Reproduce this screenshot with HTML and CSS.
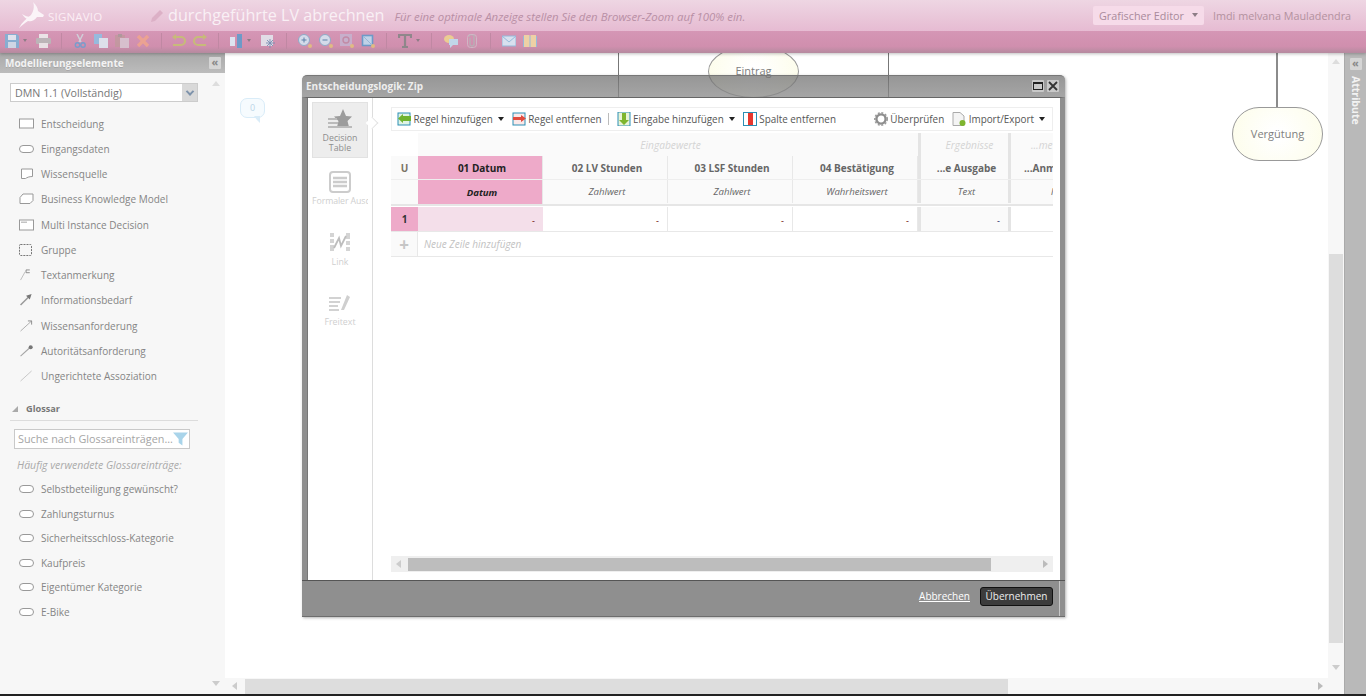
FILE: index.html
```html
<!DOCTYPE html>
<html lang="de">
<head>
<meta charset="utf-8">
<title>Signavio</title>
<link rel="stylesheet" href="styles.css">
</head>
<body>
<div class="page">
  <header class="header">
    <div class="topbar">
      <svg class="logo" viewBox="0 0 30 30" width="30" height="30"><path d="M1 28C4 22 9 18 13 15C15 12 17 7 15 2C18 5 20 8 20 11L26 15L25 17L19 17C16 21 13 22 10 21C7 23 4 25 1 28Z" fill="#fbf4f8"/><path d="M11 20C8 19 6 17 4 14C7 16 10 17 13 17Z" fill="#fbf4f8"/></svg>
      <span class="brand">SIGNAVIO</span>
      <svg class="pencil" viewBox="0 0 14 14" width="14" height="14"><path d="M1 13L2 9L10 1L13 4L5 12Z" fill="#dcb0c6"/></svg>
      <span class="doc-title">durchgeführte LV abrechnen</span>
      <span class="hint">Für eine optimale Anzeige stellen Sie den Browser-Zoom auf 100% ein.</span>
      <span class="spacer"></span>
      <span class="editor-btn">Grafischer Editor <i class="tri"></i></span>
      <span class="user">Imdi melvana Mauladendra</span>
    </div>
    <div class="toolbar">
      <div class="tb-group first">
        <svg class="ti" viewBox="0 0 14 14"><path d="M0 0H12L14 2V14H0Z" fill="#7fb2d6"/><rect x="3" y="1" width="8" height="5" fill="#e3eef6"/><rect x="3" y="8" width="8" height="6" fill="#cfe0ec"/></svg>
        <i class="drop g4"></i>
        <svg class="ti g9 wide" viewBox="0 0 15 14"><rect x="3" y="0" width="9" height="5" fill="#eee"/><rect x="0" y="4" width="15" height="6" rx="1" fill="#b9b9b9"/><rect x="3" y="9" width="9" height="5" fill="#ececec"/></svg>
      </div>
      <div class="tb-group">
        <svg class="ti" viewBox="0 0 14 14"><path d="M4 0L8 8M10 0L6 8" stroke="#cfd7de" stroke-width="1.5"/><circle cx="4.5" cy="11" r="2.2" fill="none" stroke="#6d9fd0" stroke-width="1.4"/><circle cx="10" cy="11" r="2.2" fill="none" stroke="#6d9fd0" stroke-width="1.4"/></svg>
        <svg class="ti" viewBox="0 0 14 14"><rect x="0" y="0" width="8" height="10" fill="#8fc0e4"/><rect x="5" y="4" width="9" height="10" fill="#dfeaf3"/></svg>
        <svg class="ti" viewBox="0 0 14 14"><rect x="0" y="1" width="10" height="12" fill="#c2999f"/><rect x="3" y="0" width="4" height="3" fill="#a99"/><rect x="5" y="4" width="9" height="10" fill="#d8c6d2"/></svg>
        <svg class="ti" viewBox="0 0 14 14"><path d="M2 2L12 12M12 2L2 12" stroke="#efa58e" stroke-width="3.4"/></svg>
      </div>
      <div class="tb-group narrow">
        <svg class="ti" viewBox="0 0 14 14"><path d="M3 3H9A4 4 0 0 1 9 11H1" fill="none" stroke="#c6c073" stroke-width="2.2"/><path d="M4 0L0 3L4 6Z" fill="#c6c073"/></svg>
        <svg class="ti" viewBox="0 0 14 14"><path d="M11 3H5A4 4 0 0 0 5 11H13" fill="none" stroke="#c6c073" stroke-width="2.2"/><path d="M10 0L14 3L10 6Z" fill="#c6c073"/></svg>
      </div>
      <div class="tb-group">
        <svg class="ti small" viewBox="0 0 12 14"><rect x="0" y="3" width="5" height="9" fill="#dff0fa"/><rect x="7" y="0" width="5" height="14" fill="#5f9ccc"/></svg>
        <i class="drop g5"></i>
        <svg class="ti g10" viewBox="0 0 14 14"><rect x="0" y="1" width="12" height="11" fill="#e3e8ee"/><path d="M9 5V14M5 9H14M6 6L12 12M12 6L6 12" stroke="#6d8fb3" stroke-width=".9"/></svg>
      </div>
      <div class="tb-group">
        <svg class="ti" viewBox="0 0 14 14"><circle cx="6" cy="6" r="5.5" fill="#d5e6f2" stroke="#86aecb"/><path d="M3.5 6H8.5M6 3.5V8.5" stroke="#4d7fa8"/><circle cx="12" cy="12" r="2" fill="#e3c27e"/></svg>
        <svg class="ti" viewBox="0 0 14 14"><circle cx="6" cy="6" r="5.5" fill="#d5e6f2" stroke="#86aecb"/><path d="M3.5 6H8.5" stroke="#4d7fa8"/><circle cx="12" cy="12" r="2" fill="#e3c27e"/></svg>
        <svg class="ti" viewBox="0 0 14 14"><rect x="0" y="0" width="12" height="12" fill="#c6b3cf"/><circle cx="6" cy="6" r="3" fill="none" stroke="#c08aa5" stroke-width="1.4"/><circle cx="12" cy="12" r="2" fill="#e3c27e"/></svg>
        <svg class="ti" viewBox="0 0 14 14"><rect x="1.5" y="1.5" width="10" height="10" fill="#bedcf0" stroke="#5f9ccc" stroke-width="1.6"/><path d="M3 3L10 10" stroke="#8ebbdc"/><circle cx="12" cy="12" r="2" fill="#e3c27e"/></svg>
      </div>
      <div class="tb-group">
        <svg class="ti" viewBox="0 0 14 14"><path d="M1 4V1H13V4M7 1V13M4 13H10" fill="none" stroke="#868686" stroke-width="2.2"/></svg>
        <i class="drop gm3"></i>
      </div>
      <div class="tb-group wide-group">
        <svg class="ti" viewBox="0 0 14 14"><ellipse cx="5" cy="5" rx="5" ry="4" fill="#efd58e"/><path d="M5 5H14V11H9L6 14V11H5Z" fill="#bfe0f2"/></svg>
        <svg class="ti clip" viewBox="0 0 10 14"><path d="M3 4V10A2 2 0 0 0 7 10V3A2.5 2.5 0 0 0 2 3" fill="none" stroke="#b8b0b6" stroke-width="1.6"/><rect x=".5" y=".5" width="9" height="13" rx="3" fill="none" stroke="#d0bcc8"/></svg>
      </div>
      <div class="tb-group last">
        <svg class="ti" viewBox="0 0 14 14"><rect x="0" y="2" width="14" height="10" fill="#d9ecf8" stroke="#8dbfe0"/><path d="M0 2L7 8L14 2" fill="none" stroke="#8dbfe0"/></svg>
        <svg class="ti" viewBox="0 0 14 14"><rect x="0" y="2" width="14" height="11" fill="#8dbfe0"/><path d="M1 1H6.5V13H1ZM7.5 1H13V13H7.5Z" fill="#f2d9a4"/></svg>
      </div>
    </div>
  </header>

  <div class="main">
    <aside class="sidebar">
      <div class="panel-title"><span>Modellierungselemente</span><b class="collapse">«</b></div>
      <i class="arr up side-up"></i>
      <div class="select"><span>DMN 1.1 (Vollständig)</span><b><i class="chev"></i></b></div>
      <ul class="shapes">
        <li><svg viewBox="0 0 16 11" class="si"><rect x=".5" y=".5" width="14" height="9" fill="#fff" stroke="#999"/></svg>Entscheidung</li>
        <li><svg viewBox="0 0 16 11" class="si"><rect x=".5" y="2" width="14" height="7" rx="3.5" fill="#fff" stroke="#999"/></svg>Eingangsdaten</li>
        <li><svg viewBox="0 0 16 11" class="si"><path d="M2.5 .5H13.5V8C10 8 8 9 6.5 10H2.5Z" fill="#fff" stroke="#999"/></svg>Wissensquelle</li>
        <li><svg viewBox="0 0 16 11" class="si"><path d="M4 .5H14V7L11 10H1V4Z" fill="#fff" stroke="#999"/></svg>Business Knowledge Model</li>
        <li><svg viewBox="0 0 16 11" class="si"><rect x=".5" y=".5" width="14" height="10" fill="#fff" stroke="#999"/><path d="M3 2V3.5M5 2V3.5M7 2V3.5" stroke="#888"/></svg>Multi Instance Decision</li>
        <li><svg viewBox="0 0 16 12" class="si"><rect x=".5" y=".5" width="12" height="11" rx="1" fill="none" stroke="#777" stroke-dasharray="2 1"/></svg>Gruppe</li>
        <li><svg viewBox="0 0 16 13" class="si"><path d="M1 12L6 3" stroke="#bbb"/><path d="M11 1H7V4H11" fill="none" stroke="#888"/></svg>Textanmerkung</li>
        <li><svg viewBox="0 0 16 13" class="si"><path d="M1 12L10 3" stroke="#999" stroke-width="1.6"/><path d="M13 0L7 2L11 6Z" fill="#777"/></svg>Informationsbedarf</li>
        <li><svg viewBox="0 0 16 13" class="si"><path d="M1 12L13 1" stroke="#aaa"/><path d="M9 1H13V5" fill="none" stroke="#888"/></svg>Wissensanforderung</li>
        <li><svg viewBox="0 0 16 13" class="si"><path d="M1 12L11 3" stroke="#a5a5a5" stroke-width="1.2"/><circle cx="12" cy="2.5" r="2.2" fill="#777"/></svg>Autoritätsanforderung</li>
        <li><svg viewBox="0 0 16 13" class="si"><path d="M1 12L13 1" stroke="#c4c4c4"/></svg>Ungerichtete Assoziation</li>
      </ul>
      <div class="gloss-head"><i class="gloss-tri"></i>Glossar</div>
      <div class="gloss-search"><span>Suche nach Glossareinträgen...</span><svg viewBox="0 0 16 14" width="16" height="14"><path d="M0 0H16L10 7V14L6 11V7Z" fill="#a9d4ea"/></svg></div>
      <div class="gloss-note">Häufig verwendete Glossareinträge:</div>
      <ul class="terms">
        <li><svg viewBox="0 0 16 11" class="si"><rect x=".5" y="2" width="14" height="7" rx="3.5" fill="#fff" stroke="#999"/></svg>Selbstbeteiligung gewünscht?</li>
        <li><svg viewBox="0 0 16 11" class="si"><rect x=".5" y="2" width="14" height="7" rx="3.5" fill="#fff" stroke="#999"/></svg>Zahlungsturnus</li>
        <li><svg viewBox="0 0 16 11" class="si"><rect x=".5" y="2" width="14" height="7" rx="3.5" fill="#fff" stroke="#999"/></svg>Sicherheitsschloss-Kategorie</li>
        <li><svg viewBox="0 0 16 11" class="si"><rect x=".5" y="2" width="14" height="7" rx="3.5" fill="#fff" stroke="#999"/></svg>Kaufpreis</li>
        <li><svg viewBox="0 0 16 11" class="si"><rect x=".5" y="2" width="14" height="7" rx="3.5" fill="#fff" stroke="#999"/></svg>Eigentümer Kategorie</li>
        <li><svg viewBox="0 0 16 11" class="si"><rect x=".5" y="2" width="14" height="7" rx="3.5" fill="#fff" stroke="#999"/></svg>E-Bike</li>
      </ul>
      <i class="arr down side-down"></i>
    </aside>

    <section class="workspace">
      <div class="canvas">
        <div class="bubble">0</div>
        <div class="edge e1"></div>
        <div class="edge e2"></div>
        <div class="edge e3"></div>
        <div class="node eintrag"><span>Eintrag</span></div>
        <div class="node verguetung"><span>Vergütung</span></div>
      </div>
      <div class="hscroll"><i class="arr left"></i><div class="hthumb"></div><i class="arr right"></i></div>
    </section>

    <div class="vscroll"><i class="arr up"></i><div class="vthumb"></div><i class="arr down"></i></div>

    <aside class="attr">
      <b class="collapse">«</b>
      <span class="attr-label">Attribute</span>
    </aside>
  </div>
  <div class="bottom-line"></div>

  <div class="modal">
    <div class="modal-head">
      <span>Entscheidungslogik: Zip</span>
      <div class="win-btns">
        <b><i class="win-max"></i></b>
        <b class="x"><svg viewBox="0 0 10 10" width="10" height="10"><path d="M1 1L9 9M9 1L1 9" stroke="#333" stroke-width="1.8"/></svg></b>
      </div>
    </div>
    <div class="modal-body">
      <nav class="tabs">
        <div class="tab active">
          <svg viewBox="0 0 24 22" width="24" height="22"><path d="M15 0L18 7L24 7.5L19.5 12L21 18H9L10.5 12L6 7.5L12 7Z" fill="#9c9c9c"/><path d="M0 10H9M0 14H10M0 18H24" stroke="#bbb" stroke-width="2"/></svg>
          <span>Decision<br>Table</span>
        </div>
        <div class="tab dim tab-form">
          <svg viewBox="0 0 22 22" width="22" height="22"><rect x="1" y="1" width="20" height="20" rx="3" fill="none" stroke="#ccc" stroke-width="2"/><path d="M4 7H18M4 11H18M4 15H18" stroke="#ccc" stroke-width="2.4"/></svg>
          <span class="clip-label">Formaler Ausdruck</span>
        </div>
        <div class="tab dim">
          <svg viewBox="0 0 22 20" width="22" height="20"><path d="M1 1H5V5H1ZM1 7H5V11H1ZM1 13H5V19H1ZM17 1H21V7H17ZM17 9H21V13H17ZM17 15H21V19H17Z" fill="#d4d4d4"/><path d="M5 16L10 6L12 14L17 4" fill="none" stroke="#bdbdbd" stroke-width="1.8"/></svg>
          <span>Link</span>
        </div>
        <div class="tab dim tab-free">
          <svg viewBox="0 0 22 18" width="22" height="18"><path d="M0 4H12M0 8H11M0 12H9M0 16H10" stroke="#d2d2d2" stroke-width="2"/><path d="M12 16L18 1L21 3L15 16Z" fill="#cfcfcf"/></svg>
          <span>Freitext</span>
        </div>
        <i class="tab-notch"></i>
      </nav>
      <div class="editor">
        <div class="ed-toolbar">
          <span class="tool"><svg viewBox="0 0 14 14" width="14" height="14"><rect x="1" y="1" width="12" height="12" fill="#dff3e4" stroke="#2c8fb5"/><path d="M6 4H14V9H6V11L1 6.5L6 2Z" fill="#6fb32f"/></svg>Regel hinzufügen<i class="tri dark"></i></span>
          <span class="tool"><svg viewBox="0 0 14 14" width="14" height="14"><rect x="1" y="1" width="12" height="12" fill="#fbe8e8" stroke="#2c8fb5"/><path d="M1 5H9V3L14 6.5L9 10V8H1Z" fill="#e14a3d"/></svg>Regel entfernen</span>
          <i class="tool-sep"></i>
          <span class="tool"><svg viewBox="0 0 14 14" width="14" height="14"><rect x="1" y="0" width="12" height="14" fill="#e8f3d8" stroke="#2c8fb5"/><path d="M5 1H9V8H12L7 13L2 8H5Z" fill="#7eb52e"/></svg>Eingabe hinzufügen<i class="tri dark"></i></span>
          <span class="tool"><svg viewBox="0 0 14 14" width="14" height="14"><rect x=".5" y=".5" width="13" height="13" fill="#fff" stroke="#2c8fb5"/><rect x="5" y="1" width="5" height="12" fill="#e8382e"/></svg>Spalte entfernen</span>
          <span class="spacer"></span>
          <span class="tool"><svg viewBox="0 0 14 14" width="14" height="14"><circle cx="7" cy="7" r="4.6" fill="none" stroke="#8d8d8d" stroke-width="2.4"/><circle cx="7" cy="7" r="6.2" fill="none" stroke="#9a9a9a" stroke-width="1.6" stroke-dasharray="2 1.6"/></svg>Überprüfen</span>
          <span class="tool"><svg viewBox="0 0 14 14" width="14" height="14"><path d="M1 .5H8L12 4V13.5H1Z" fill="#f4f4f4" stroke="#aaa"/><circle cx="10.5" cy="11" r="3" fill="#7eb52e"/></svg>Import/Export<i class="tri dark"></i></span>
        </div>
        <div class="table-wrap">
          <div class="dt">
            <div class="row r-group">
              <div class="c cu blank"></div>
              <div class="c cg-in">Eingabewerte</div>
              <div class="c cg-out thick">Ergebnisse</div>
              <div class="c cg-more thick">...me</div>
            </div>
            <div class="row r-head">
              <div class="c cu u">U</div>
              <div class="c w1 sel">01 Datum</div>
              <div class="c w1">02 LV Stunden</div>
              <div class="c w1">03 LSF Stunden</div>
              <div class="c w1">04 Bestätigung</div>
              <div class="c w2 thick">...e Ausgabe</div>
              <div class="c w3 thick">...Anmerkung</div>
            </div>
            <div class="row r-type">
              <div class="c cu"></div>
              <div class="c w1 sel">Datum</div>
              <div class="c w1">Zahlwert</div>
              <div class="c w1">Zahlwert</div>
              <div class="c w1">Wahrheitswert</div>
              <div class="c w2 thick">Text</div>
              <div class="c w3 thick lang">lang</div>
            </div>
            <div class="row r-data">
              <div class="c cu idx">1</div>
              <div class="c w1 val active">-</div>
              <div class="c w1 val">-</div>
              <div class="c w1 val">-</div>
              <div class="c w1 val">-</div>
              <div class="c w2 val thick out">-</div>
              <div class="c w3 thick"></div>
            </div>
            <div class="row r-add">
              <div class="c cu plus">+</div>
              <div class="c add-label">Neue Zeile hinzufügen</div>
            </div>
          </div>
        </div>
        <div class="t-scroll"><i class="arr left small-arr"></i><div class="t-thumb"></div><i class="arr right dark-arr"></i></div>
      </div>
    </div>
    <div class="modal-foot">
      <a class="cancel" href="#">Abbrechen</a>
      <button class="apply" type="button">Übernehmen</button>
    </div>
  </div>
</div>
</body>
</html>
```

FILE: styles.css
```css
* { box-sizing: border-box; }
html, body { margin: 0; padding: 0; height: 100%; overflow: hidden; }
body { font-family: "Open Sans", "Liberation Sans", sans-serif; color: #777; background: #fff; }
ul { list-style: none; margin: 0; padding: 0; }
.page { position: relative; width: 1366px; height: 696px; overflow: hidden; display: flex; flex-direction: column; }
.spacer { flex: 1; }

.header { height: 53px; flex: none; position: relative; z-index: 3; box-shadow: 0 1px 3px rgba(0,0,0,.25); }
.topbar { height: 31px; display: flex; align-items: center; background: linear-gradient(#eed6e3, #e6bbd2); padding-right: 10px; }
.logo { margin: 0 0 0 18px; align-self: flex-start; }
.brand { font-size: 11.5px; color: #fbeef5; margin: 2px 0 0 0; width: 100px; letter-spacing: .2px; }
.pencil { margin-left: 2px; margin-right: 4px; }
.doc-title { font-size: 16.2px; color: #f9f0f5; margin-top: -2px; }
.hint { font-size: 11.4px; font-style: italic; color: #b88fa5; margin-left: 10px; margin-top: 1px; }
.editor-btn { height: 19px; width: 111px; padding-left: 6px; display: flex; align-items: center; gap: 8px; font-size: 10.8px; color: #a98a9b; background: #f6dbe9; border-radius: 2px; margin-right: 9px; margin-top: -1px; white-space: nowrap; }
.user { font-size: 10.8px; color: #b3929f; width: 143px; margin-top: -1px; white-space: nowrap; }
.tri { display: inline-block; width: 0; height: 0; border: 3px solid transparent; border-top: 4px solid #8d7d86; border-bottom: 0; }
.tri.dark { border-top-color: #222; margin-left: 2.5px; }

.toolbar { height: 22px; display: flex; align-items: center; background: linear-gradient(#d596b5, #d08fae 70%, #b58a9f); }
.tb-group { display: flex; align-items: center; gap: 7px; padding: 0 11px; height: 16px; border-right: 1px solid #c088a3; margin-top: -3px; }
.tb-group.first { padding-left: 5px; gap: 0; padding-right: 10px; }
.tb-group.narrow { padding: 0 11px 0 10px; }
.tb-group.wide-group { padding: 0 13px 0 12px; }
.tb-group.last { border-right: 0; }
.ti { width: 14px; height: 14px; flex: none; opacity: .88; }
.ti.wide { width: 15px; }
.ti.small { width: 12px; }
.ti.clip { width: 10px; margin-left: 2px; }
.drop { width: 0; height: 0; border: 2.5px solid transparent; border-top: 3px solid #8d7d86; border-bottom: 0; flex: none; }
.g4 { margin-left: 4px; }
.g5 { margin-left: -2px; }
.gm3 { margin-left: -3px; }
.g9 { margin-left: 9px; }
.g10 { margin-left: 3px; }

.main { flex: 1; display: flex; min-height: 0; }
.sidebar { width: 225px; flex: none; background: #f7f7f7; position: relative; }
.panel-title { height: 20px; display: flex; align-items: center; justify-content: space-between; padding: 0 4px 1px 5px; background: linear-gradient(#a9a9a9, #bcbcbc); font-size: 10px; font-weight: 700; color: #f3f3f3; text-shadow: 0 1px 0 rgba(0,0,0,.1); }
.collapse { width: 12px; height: 12px; background: #d5d5d5; color: #888; font-size: 11px; line-height: 10px; text-align: center; font-weight: 700; border-radius: 1px; display: block; text-shadow: none; }
.arr { display: block; width: 0; height: 0; border: 4px solid transparent; }
.arr.up { border-top: 0; border-bottom: 5px solid #ddd; }
.arr.down { border-bottom: 0; border-top: 5px solid #ccc; }
.arr.left { border-left: 0; border-right: 5px solid #ccc; }
.arr.right { border-right: 0; border-left: 5px solid #bbb; }
.side-up { position: absolute; right: 5px; top: 28px; }
.side-down { position: absolute; right: 5px; bottom: 8px; }
.select { margin: 10px 27px 0 10px; height: 19px; background: #fff; border: 1px solid #ccc; display: flex; align-items: center; justify-content: space-between; font-size: 10.7px; color: #777; padding-left: 4px; }
.select b { width: 15px; height: 17px; background: #d9d9d9; display: flex; align-items: center; justify-content: center; }
.chev { width: 6px; height: 6px; border: 2px solid #7e93ab; border-top: 0; border-left: 0; transform: rotate(45deg) translate(-1px,-1px); }
.si { width: 16px; height: 12px; flex: none; margin-right: 6px; }
.shapes { margin-top: 9px; padding-left: 19px; }
.shapes li, .terms li { display: flex; align-items: center; font-size: 10px; color: #858585; }
.shapes li { height: 25.25px; }
.gloss-head { margin: 8px 27px 0 10px; height: 24px; border-bottom: 1px solid #dcdcdc; display: flex; align-items: center; font-size: 9.2px; font-weight: 700; color: #777; padding-top: 1px; }
.gloss-tri { width: 0; height: 0; margin: 0 8px 0 2px; border-left: 6px solid transparent; border-bottom: 6px solid #aaa; }
.gloss-search { margin: 8px 35px 0 14px; height: 20px; width: 176px; background: #fff; border: 1px solid #c9c9c9; display: flex; align-items: center; justify-content: space-between; padding: 0 1px 0 3px; font-size: 10.8px; color: #a5a5a5; white-space: nowrap; overflow: hidden; }
.gloss-note { margin: 8px 0 0 17px; font-size: 10.5px; font-style: italic; color: #aaa; height: 16px; line-height: 16px; }
.terms { padding-left: 19px; margin-top: 4px; }
.terms li { height: 24.6px; }

.workspace { flex: 1; min-width: 0; display: flex; flex-direction: column; }
.canvas { flex: 1; position: relative; overflow: hidden; background: #fff; }
.bubble { position: absolute; left: 15px; top: 45px; width: 25px; height: 20px; border: 1px solid #d9ecf8; border-radius: 7px; background: #f6fbfe; color: #bcd6e8; font-size: 9px; text-align: center; line-height: 18px; }
.bubble::after { content: ""; position: absolute; left: 13px; bottom: -6px; border: 3px solid transparent; border-top: 4px solid #d9ecf8; border-right-color: #d9ecf8; }
.edge { position: absolute; width: 1px; background: #777; top: 0; }
.e1 { left: 393px; height: 44px; }
.e2 { left: 663px; height: 44px; }
.e3 { left: 1051px; width: 2px; height: 54px; background: #8b8b8b; }
.node { position: absolute; background: radial-gradient(circle, #fff 10%, #fdfde9); border: 1px solid #999; display: flex; align-items: center; justify-content: center; font-size: 11px; color: #808080; }
.eintrag { left: 483px; top: -8px; width: 91px; height: 53px; border-radius: 50%; padding-bottom: 3px; }
.verguetung { left: 1007px; top: 54px; width: 91px; height: 54px; border-radius: 27px; padding-bottom: 1px; }
.hscroll { height: 16px; flex: none; background: #f7f7f7; display: flex; align-items: center; padding: 0 5px 0 7px; }
.hthumb { width: 763px; height: 15px; background: #ddd; margin: 0 auto 0 8px; }
.vscroll { width: 16px; flex: none; background: #f7f7f7; display: flex; flex-direction: column; align-items: center; position: relative; }
.vscroll .up { margin-top: 6px; }
.vthumb { position: absolute; left: 1px; top: 201px; width: 14px; height: 389px; background: #ddd; }
.vscroll .down { margin-top: auto; margin-bottom: 24px; }
.attr { width: 22px; flex: none; background: #b9b9b9; position: relative; display: flex; flex-direction: column; align-items: center; padding-top: 5px; border-left: 1px solid #aaa; }
.attr-label { writing-mode: vertical-rl; font-size: 10.5px; font-weight: 700; color: #f2f2f2; margin-top: 6px; }
.bottom-line { height: 2px; background: #222; flex: none; }

.modal { position: absolute; left: 302px; top: 75px; width: 763px; height: 542px; z-index: 5; border-radius: 5px 5px 0 0; box-shadow: 1px 1px 3px rgba(0,0,0,.3); display: flex; flex-direction: column; }
.modal-head { height: 22px; display: flex; align-items: center; justify-content: space-between; padding: 0 5px 1px 4px; font-size: 10px; font-weight: 700; color: #eee; flex: none; background: linear-gradient(rgba(110,110,110,.72), rgba(140,140,140,.78)); border-top: 1px solid #777; border-radius: 5px 5px 0 0; }
.win-btns { display: flex; gap: 3px; margin-right: 1px; }
.win-btns b { width: 12px; height: 12px; background: #c9c9c9; display: flex; align-items: center; justify-content: center; border-radius: 1px; }
.win-max { width: 10px; height: 8px; border: 1px solid #222; border-top-width: 2px; }
.modal-body { flex: 1; min-height: 0; background: #fff; display: flex; border-style: solid; border-color: #666 #8f8f8f #8f8f8f #8f8f8f; border-width: 1px 5px 0 5px; }
.modal-foot { height: 37px; flex: none; background: linear-gradient(90deg, #8f8f8f 757px, #c8c8c8 757px, #c8c8c8 758px, #8f8f8f 758px); border-top: 1px solid #555; border-bottom: 1px solid #6d6d6d; display: flex; align-items: center; justify-content: flex-end; gap: 10px; padding: 0 12px 5px 0; }
.cancel { font-size: 10px; color: #fff; text-decoration: underline; }
.apply { width: 73px; height: 19px; padding: 0; background: #3c3c3c; border: 1px solid #111; border-radius: 3px; color: #eee; font: 10px "Open Sans", sans-serif; }

.tabs { width: 66px; flex: none; border-right: 1px solid #ddd; padding: 4px 4px 0 5px; position: relative; display: flex; flex-direction: column; box-shadow: inset 1px 0 0 #777; }
.tab { width: 56px; height: 60.5px; display: flex; flex-direction: column; align-items: center; padding-top: 7px; gap: 5px; font-size: 8.8px; line-height: 10px; text-align: center; color: #8d8d8d; overflow: hidden; flex: none; }
.tab.active { height: 56px; padding-top: 6px; gap: 2px; background: #ededed; border: 1px solid #e2e2e2; margin-bottom: 6px; }
.tab.dim { color: #cfcfcf; }
.tab.tab-form { gap: 3px; }
.tab.tab-free { padding-top: 9px; }
.clip-label { white-space: nowrap; width: 56px; overflow: hidden; text-align: left; letter-spacing: -.1px; }
.tab-notch { position: absolute; left: 60px; top: 20px; width: 10px; height: 10px; background: #fff; border: 1px solid #e2e2e2; border-left: 0; border-bottom: 0; transform: rotate(45deg) scale(.9); }

.editor { flex: 1; min-width: 0; padding: 9px 7px 0 18px; display: flex; flex-direction: column; }
.ed-toolbar { height: 24px; flex: none; border: 1px solid #eee; display: flex; align-items: center; font-size: 9.9px; color: #555; padding: 0 7px 0 5px; gap: 8px; white-space: nowrap; }
.tool { display: inline-flex; align-items: center; gap: 2.5px; }
.tool-sep { width: 1px; height: 12px; background: #bbb; margin: 0 0 0 -2px; }
.table-wrap { overflow: hidden; height: 425px; flex: none; }
.dt { width: 700px; font-size: 10px; }
.row { display: flex; }
.c { flex: none; display: flex; align-items: center; justify-content: center; }
.cu { width: 27px; background: #fafafa; }
.blank { background: #fff; }
.w1 { width: 125px; border-right: 1px solid #e8e8e8; }
.w2 { width: 90px; border-right: 0; }
.r-head .w1, .r-head .w2, .r-type .w1, .r-type .w2 { padding-left: 4px; }
.w3 { width: 90px; justify-content: flex-start; padding-left: 13px; white-space: nowrap; }
.w3.lang { padding-left: 40px; }
.thick { border-left: 3px solid #e4e4e4; }
.r-group { height: 25px; color: #d4d4d4; font-style: italic; font-size: 10.2px; padding-top: 2px; }
.cg-in { width: 500px; background: #fafafa; padding-left: 5px; }
.cg-out { width: 90px; background: #fafafa; padding-left: 10px; }
.cg-more { width: 60px; background: #fafafa; justify-content: flex-start; padding-left: 20px; }
.r-head { height: 24px; font-weight: 700; font-size: 10px; color: #666; border-bottom: 1px solid #eee; }
.r-head .c { background: #fafafa; }
.r-head .u { color: #7b7465; }
.r-head .sel, .r-type .sel { background: #eeaac9; color: #222; }
.r-type { height: 26px; font-style: italic; font-size: 9.6px; color: #666; border-bottom: 2px solid #e6e6e6; padding-bottom: 1px; background: #fafafa; }
.r-type .c { background: #fafafa; }
.r-type .sel { font-weight: 700; background: #eeaac9; margin-bottom: -1px; }
.r-data { height: 26px; border-bottom: 1px solid #e8e8e8; padding-top: 1px; }
.idx { background: #eeaac9; color: #333; font-weight: 700; }
.val { justify-content: flex-end; padding: 3px 8px 0 0; font-size: 9px; color: #600; background: #fff; }
.val.active { background: #f4dfea; border-right: 0; }
.val.out { background: #fafafa; color: #226; }
.r-add { height: 25px; border-bottom: 1px solid #e8e8e8; }
.plus { background: #fafafa; color: #c6c6c6; font-size: 17px; font-weight: 700; border-right: 1px solid #e8e8e8; }
.add-label { padding-left: 6px; color: #c2c2c2; font-style: italic; font-size: 10px; }
.t-scroll { height: 16px; width: 662px; flex: none; background: #efefef; display: flex; align-items: center; padding: 0 5px; justify-content: space-between; position: relative; }
.t-thumb { position: absolute; left: 17px; top: 2px; width: 583px; height: 13px; background: #bdbdbd; }
.dark-arr { border-left-color: #555; }
.small-arr { border-right-color: #aaa; }
```
